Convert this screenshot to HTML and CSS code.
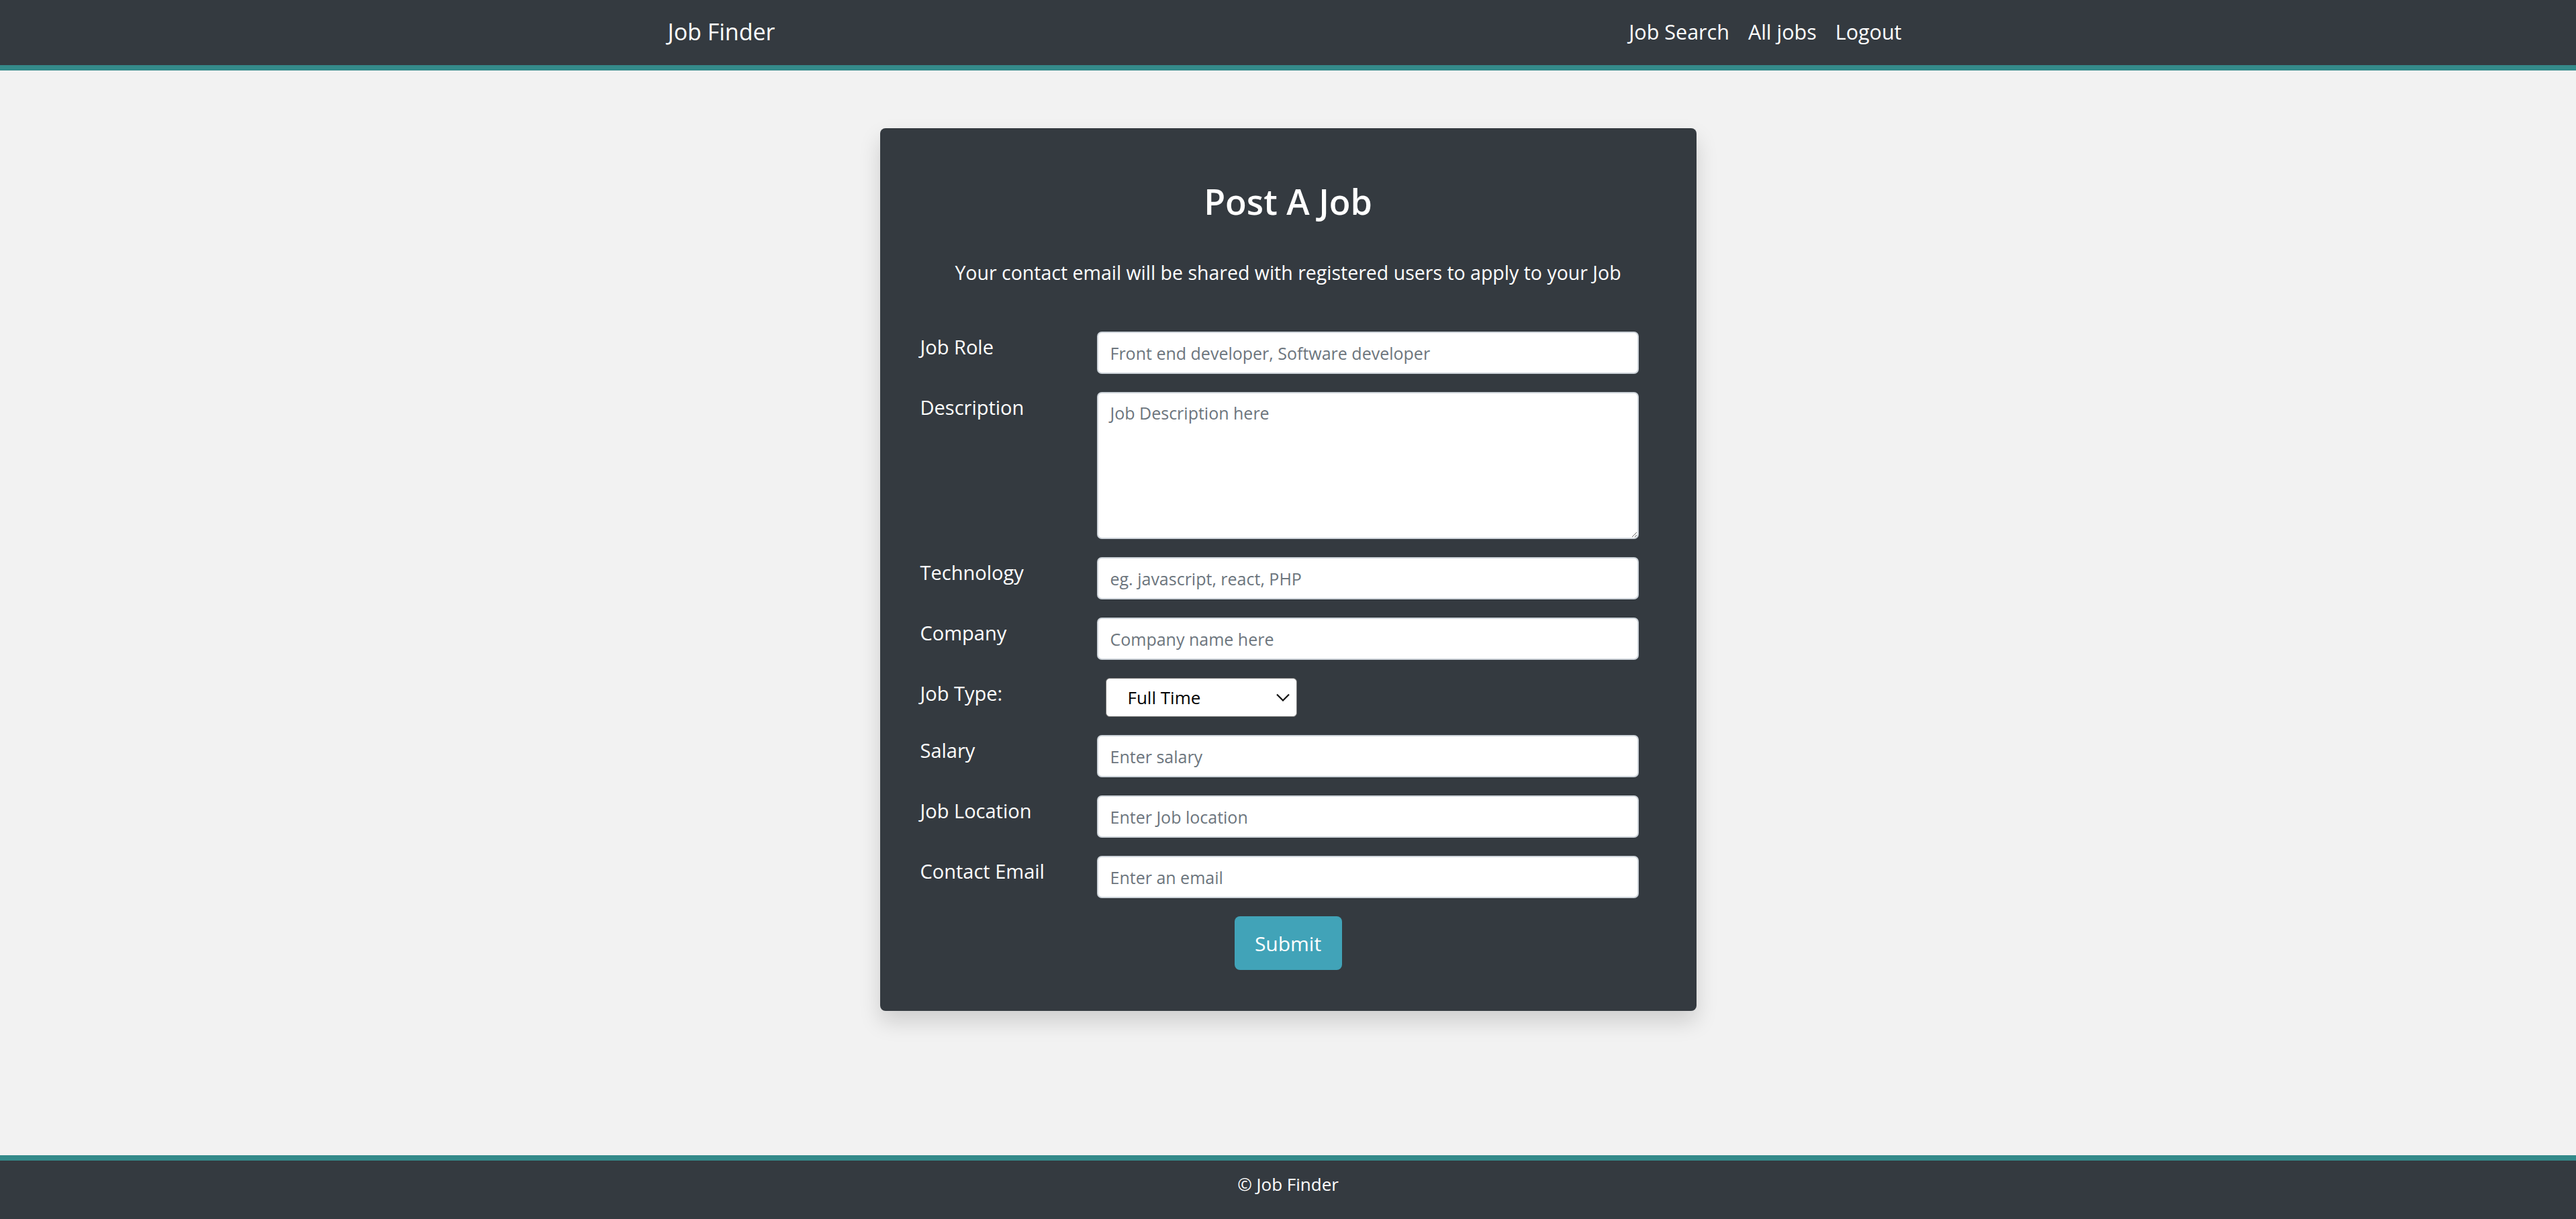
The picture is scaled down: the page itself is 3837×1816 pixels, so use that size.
FILE: index.html
```html
<!DOCTYPE html>
<html lang="en">
<head>
<meta charset="utf-8">
<title>Job Finder - Post A Job</title>
<link rel="stylesheet" href="styles.css">
</head>
<body>
<header class="navbar">
  <div class="nav-inner">
    <a class="brand" href="#">Job Finder</a>
    <nav class="nav-links">
      <a class="nav-link" href="#">Job Search</a>
      <a class="nav-link" href="#">All jobs</a>
      <a class="nav-link" href="#">Logout</a>
    </nav>
  </div>
</header>
<main class="main">
  <section class="card">
    <h1 class="card-title">Post A Job</h1>
    <p class="card-sub">Your contact email will be shared with registered users to apply to your Job</p>
    <form class="job-form">
      <label class="form-label" for="role">Job Role</label>
      <input class="form-input" id="role" type="text" placeholder="Front end developer, Software developer">

      <label class="form-label" for="desc">Description</label>
      <textarea class="form-input form-textarea" id="desc" placeholder="Job Description here"></textarea>

      <label class="form-label" for="tech">Technology</label>
      <input class="form-input" id="tech" type="text" placeholder="eg. javascript, react, PHP">

      <label class="form-label" for="company">Company</label>
      <input class="form-input" id="company" type="text" placeholder="Company name here">

      <label class="form-label" for="type">Job Type:</label>
      <div class="select-wrap">
        <select class="form-select" id="type">
          <option>Full Time</option>
          <option>Part Time</option>
          <option>Contract</option>
        </select>
        <svg class="select-chevron" width="20" height="12" viewBox="0 0 20 12"><path d="M1 1.5 L10 10.5 L19 1.5" fill="none" stroke="#111" stroke-width="2.2"/></svg>
      </div>

      <label class="form-label" for="salary">Salary</label>
      <input class="form-input" id="salary" type="text" placeholder="Enter salary">

      <label class="form-label" for="loc">Job Location</label>
      <input class="form-input" id="loc" type="text" placeholder="Enter Job location">

      <label class="form-label" for="email">Contact Email</label>
      <input class="form-input" id="email" type="email" placeholder="Enter an email">

      <div class="form-actions">
        <button class="btn-submit" type="submit">Submit</button>
      </div>
    </form>
  </section>
</main>
<footer class="footer">
  <p class="footer-text">© Job Finder</p>
</footer>
</body>
</html>
```
FILE: styles.css
```css
* { box-sizing: border-box; }
html, body { margin: 0; padding: 0; }
body {
  min-height: 100vh;
  display: flex;
  flex-direction: column;
  background: #f2f2f2;
  font-family: "Open Sans", "Noto Sans", sans-serif;
  color: #212529;
}
.navbar {
  background: #343a40;
  border-bottom: 8px solid #348a8a;
  height: 105px;
}
.nav-inner {
  width: 1860px;
  height: 97px;
  padding-bottom: 4px;
  margin: 0 auto;
  display: flex;
  align-items: center;
  justify-content: space-between;
}
.brand {
  color: #fff;
  text-decoration: none;
  font-size: 34px;
  font-weight: 500;
  margin-left: 6px;
}
.nav-links { display: flex; }
.nav-link {
  color: #fff;
  text-decoration: none;
  font-size: 30.5px;
  padding: 0 14px;
}
.nav-link:last-child { padding-right: 16px; }
.main {
  flex: 1;
  padding-top: 86px;
}
.card {
  width: 1216px;
  margin: 0 auto;
  background: #343a40;
  border-radius: 8px;
  box-shadow: 0 16px 32px rgba(0,0,0,0.15);
  padding: 78px 86px 61px 60px;
  color: #fff;
}
.card-title {
  margin: 0;
  text-align: center;
  font-size: 52px;
  font-weight: 600;
  line-height: 1.2;
  padding-left: 26px;
}
.card-sub {
  margin: 54px 0 0;
  text-align: center;
  font-size: 28.5px;
  line-height: 1.5;
  white-space: nowrap;
  padding-left: 26px;
}
.job-form {
  margin-top: 66px;
  display: grid;
  grid-template-columns: 263px 1fr;
  row-gap: 27px;
}
.form-label {
  font-size: 29px;
  line-height: 1.5;
  padding-top: 1px;
  color: #fff;
}
.form-input {
  height: 63px;
  width: 100%;
  border: 2px solid #ced4da;
  border-radius: 7px;
  background: #fff;
  padding: 0 18px;
  font-family: inherit;
  font-size: 25px;
  color: #495057;
  outline: none;
}
.form-input::placeholder { color: #6c757d; }
.form-textarea {
  height: 219px;
  padding-top: 12px;
  resize: vertical;
}
.select-wrap {
  position: relative;
  width: 285px;
  height: 58px;
  margin-left: 13px;
}
.form-select {
  appearance: none;
  -webkit-appearance: none;
  width: 100%;
  height: 100%;
  border: 1.5px solid #767676;
  border-radius: 6px;
  background: #fff;
  font-family: inherit;
  font-size: 26px;
  color: #000;
  padding: 0 40px 0 32px;
  outline: none;
}
.select-chevron {
  position: absolute;
  right: 11px;
  top: 23px;
  pointer-events: none;
}
.form-actions {
  grid-column: 1 / -1;
  display: flex;
  justify-content: center;
  padding-left: 26px;
}
.btn-submit {
  width: 160px;
  height: 80px;
  background: #41a3b8;
  border: none;
  border-radius: 8px;
  color: #fff;
  font-family: inherit;
  font-size: 30px;
}
.footer {
  background: #343a40;
  border-top: 8px solid #348a8a;
  height: 95px;
  display: flex;
  align-items: center;
  justify-content: center;
}
.footer-text {
  margin: 0 0 18px;
  color: #fff;
  font-size: 26px;
}
```
